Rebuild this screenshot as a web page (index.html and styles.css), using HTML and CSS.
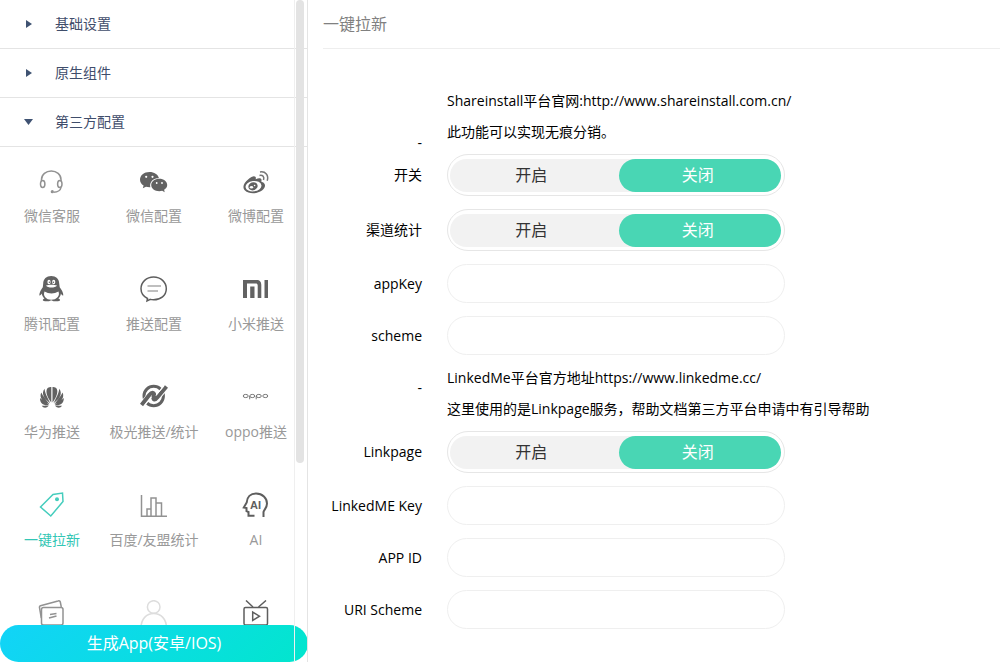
FILE: index.html
```html
<!DOCTYPE html>
<html lang="zh-CN">
<head>
<meta charset="utf-8">
<meta name="viewport" content="width=device-width, initial-scale=1">
<title>一键拉新</title>
<link rel="stylesheet" href="styles.css">
</head>
<body>
<div class="app">
  <aside class="sidebar">
    <nav class="menu">
      <button class="menu-head" type="button" aria-expanded="false"><svg class="arrow" viewBox="0 0 10 10"><path d="M3 1L9 5L3 9Z"/></svg>基础设置</button>
      <button class="menu-head" type="button" aria-expanded="false"><svg class="arrow" viewBox="0 0 10 10"><path d="M3 1L9 5L3 9Z"/></svg>原生组件</button>
      <button class="menu-head" type="button" aria-expanded="true"><svg class="arrow" viewBox="0 0 10 10"><path d="M1 2H10L5.500 8Z"/></svg>第三方配置</button>
      <div class="tiles">
        <a class="tile" href="#"><svg class="icon light" viewBox="0 0 28 28"><path d="M3.500 13V11.500C3.500 6.500 8 3 13.300 3S23 6.500 23 11.500V13M23 19.500C22.500 22.500 19.500 24 15.500 24.300"/><ellipse cx="4.700" cy="16" rx="2.200" ry="3.500"/><ellipse cx="21.800" cy="16" rx="2.200" ry="3.500"/><circle class="fill" cx="14.300" cy="23.700" r="1.600"/></svg>微信客服</a>
        <a class="tile" href="#"><svg class="icon solid" viewBox="0 0 28 28"><path d="M9.500 4C4 4 0 7.400 0 11.700C0 14.100 1.400 16.200 3.600 17.600L2.800 20.300L6 18.700C7.100 19 8.300 19.200 9.500 19.200H10.300C9.200 13.700 13.500 9.900 18.900 9.900C18 6.500 14.200 4 9.500 4Z"/><path d="M27.200 17C27.200 13.500 23.700 10.800 19.300 10.800S11.200 13.500 11.200 17S14.800 23.200 19.300 23.200C20.300 23.200 21.300 23.100 22.200 22.800L24.700 24.200L24.100 21.800C26 20.700 27.200 19 27.200 17Z"/><g class="hole"><circle cx="6.200" cy="8.800" r="1.100"/><circle cx="12.500" cy="8.800" r="1.100"/><circle cx="16.700" cy="15" r=".9"/><circle cx="22" cy="15" r=".9"/></g></svg>微信配置</a>
        <a class="tile" href="#"><svg class="icon solid" viewBox="0 0 28 28"><path d="M9.500 9C12.500 7.300 14.500 8.500 13.700 11.200C17 9.700 20 10 19.500 12.500C19.400 13.300 19 13.700 20 14C24 15.300 24 19.500 20 22.500C15 26.100 6.500 26 3 22.500C0 19.500 1 14.500 9.500 9Z"/><ellipse class="hole" cx="11.500" cy="18.200" rx="8" ry="5.200" transform="rotate(-7 11.500 18.200)"/><ellipse cx="11" cy="18.300" rx="4.700" ry="4" transform="rotate(-20 11 18.300)"/><ellipse class="hole" cx="9.500" cy="19.300" rx="1.700" ry="1.300"/><circle class="hole" cx="12.600" cy="17.500" r=".8"/><path class="line" d="M17.500 7.500C20.800 6.800 22.600 9 21.500 12M18 4C23.500 3 27 7.500 25.200 12.800"/></svg>微博配置</a>

        <a class="tile" href="#"><svg class="icon solid" viewBox="0 0 28 28"><path d="M13.200 0C8.500 0 5.200 3 5.200 7.500L4.800 11.200C3.300 13.500 1.200 16.500 1.300 19.300C2 20 3.200 18.500 3.800 17.500C4 19.600 5 21.300 6.500 22.500C4.500 23 4 25.200 7 25.200H11L13.200 24.200L15.500 25.200H20C23 25.200 22.500 23 20.300 22.500C21.800 21.300 22.700 19.600 22.900 17.500C23.700 18.800 24.500 20 25.300 19.300C25.500 16.500 23.300 13.500 21.700 11.200L21.200 7.500C21.200 3 18 0 13.200 0Z"/><path class="hole" d="M6.500 15.500C11 18 16 18 20.500 15.500C22.300 20 18.500 23.800 13.300 23.800S4.700 20 6.500 15.500Z"/><path class="hole" d="M8 9.500C11 8.400 16 8.400 19 9.500C17 12.200 9.800 12.200 8 9.500Z"/><ellipse class="hole" cx="11" cy="6" rx="1.600" ry="2.200"/><ellipse class="hole" cx="15.700" cy="6" rx="1.600" ry="2.200"/><circle cx="11.400" cy="6.200" r=".7"/><circle cx="15.400" cy="6.200" r=".7"/></svg>腾讯配置</a>
        <a class="tile" href="#"><svg class="icon" viewBox="0 0 28 28"><path d="M7.500 22.500C3.500 20.500 1 17 1 12.800C1 6 6.500 1 13.600 1S26.300 6 26.300 12.800S20.500 23.800 13.600 23.800C12.500 23.800 11.300 23.700 10.300 23.400L7 25Z"/><path class="pale" d="M7.500 10H21M7.500 15H18"/></svg>推送配置</a>
        <a class="tile" href="#"><svg class="icon solid" viewBox="0 0 28 28"><path d="M1 4H14.500C18 4 19.300 6 19.300 9V22H15.700V9.500C15.700 8 15 7.400 13.700 7.400H5V22H1ZM8.200 10.500H12.500V22H8.200ZM22.500 4H26V22H22.500Z"/></svg>小米推送</a>

        <a class="tile" href="#"><svg class="icon solid" viewBox="0 0 28 28"><path d="M13.300 18.500C8.500 12.500 7 6 10 3.700C11 3 12.600 2.900 13.300 3ZM14.500 18.500V3C15.200 2.900 16.800 3 17.800 3.700C20.800 6 19.300 12.500 14.500 18.500ZM12.300 19.300C6 14.500 2.800 9.500 6.600 4.700C6.800 9 9.500 13.500 12.300 19.300ZM15.500 19.300C21.800 14.500 25 9.500 21.200 4.700C21 9 18.300 13.500 15.500 19.300ZM11.500 20.200C4.800 18.300.8 13.500 3.300 8.500C4.800 12 8 15.500 11.500 20.200ZM16.300 20.200C23 18.300 27 13.500 24.500 8.500C23 12 19.800 15.500 16.300 20.200ZM11 21C6.200 22 1.800 19.500 2 13.900C4.500 16.500 8 18 11 21ZM16.800 21C21.600 22 26 19.500 25.800 13.900C23.300 16.500 19.800 18 16.800 21ZM10.800 21.700C8.500 24.300 5.500 24.300 3.700 21.800ZM17 21.700C19.300 24.300 22.300 24.300 24.100 21.800Z"/></svg>华为推送</a>
        <a class="tile" href="#"><svg class="icon jg" viewBox="0 0 28 28"><circle cx="13.700" cy="12" r="9.700"/><path class="gap" d="M2 21L9.500 11.500C11.800 8.500 14.300 8.500 13.200 11.500C11.800 16.500 15 16.500 17.500 13.300L26 3"/><path d="M1.500 21L9.300 11C12 7.700 15 8.300 13.800 11.800C12.300 16.500 15 16.500 17.700 13L26.500 2.500"/><path class="thread" d="M3.500 22.500L11.500 13M16 11.500L24 2"/></svg>极光推送/统计</a>
        <a class="tile" href="#"><svg class="icon thin" viewBox="0 0 28 28"><ellipse cx="3.700" cy="12" rx="2.500" ry="1.600"/><ellipse cx="10.300" cy="12" rx="2.500" ry="1.600"/><ellipse cx="16.800" cy="12" rx="2.500" ry="1.600"/><ellipse cx="23.300" cy="12" rx="2.500" ry="1.600"/><path d="M7.700 12V15.300M14.200 12V15.300"/></svg>oppo推送</a>

        <a class="tile active" href="#"><svg class="icon" viewBox="0 0 28 28"><path d="M2.500 15L15 2.500L24.500 1L25 9.500L12.800 24Z"/><circle class="fill" cx="19" cy="7.200" r="2"/></svg>一键拉新</a>
        <a class="tile" href="#"><svg class="icon light" viewBox="0 0 28 28"><path d="M1.500 3V24.200H27M7 24V17H11V24M11 17V6H16V24M16 11H21.500V24"/></svg>百度/友盟统计</a>
        <a class="tile" href="#"><svg class="icon bold" viewBox="0 0 28 28"><path d="M12.500 23.800H6.500V20C5.700 19.700 5 19.500 4.500 19.200V16L1.800 15.500L4.700 10.500C5 5 8.500 1.500 14 1.500C20.500 1.500 25 6 25 11.500C25 16 22 17.500 21.500 20V25"/><text x="8" y="17">AI</text></svg>AI</a>

        <a class="tile" href="#" aria-label="卡券"><svg class="icon light" viewBox="0 0 28 28"><rect x="3.500" y="7.500" width="21.500" height="17.500" rx="2"/><path d="M3.300 18L1.500 7.500C1.300 6.500 1.600 6 2.500 5.700L20 1C21.300.6 22 1 22.300 2L23.300 7M12 14.500L18.500 13.500M11 18L18.500 16"/></svg></a>
        <a class="tile" href="#" aria-label="用户"><svg class="icon faint" viewBox="0 0 28 28"><circle cx="13.700" cy="7" r="6.300"/><path d="M1 28C1 19 6.500 13.500 13.700 13.500S26.500 19 26.500 28"/></svg></a>
        <a class="tile" href="#" aria-label="视频"><svg class="icon" viewBox="0 0 28 28"><rect x="2" y="7.500" width="23.500" height="17.500" rx="1.500"/><path d="M10.700 12V20.500L17.500 16.200ZM4 .5L11 7M24 .5L16.500 7"/></svg></a>
      </div>
    </nav>
    <span class="thumb"></span>
    <button class="build" type="button">生成App(安卓/IOS)</button>
  </aside>

  <main class="main">
    <h1 class="title">一键拉新</h1>
    <form class="form">
      <div class="row info">
        <span class="dash low">-</span>
        <div class="note"><p>Shareinstall平台官网:http://www.shareinstall.com.cn/</p><p>此功能可以实现无痕分销。</p></div>
      </div>
      <div class="row">
        <span class="label" id="l-switch">开关</span>
        <div class="switch" role="radiogroup" aria-labelledby="l-switch">
          <label class="option"><input type="radio" name="switch" value="1"><span>开启</span></label>
          <label class="option"><input type="radio" name="switch" value="0" checked><span>关闭</span></label>
        </div>
      </div>
      <div class="row">
        <span class="label" id="l-channel">渠道统计</span>
        <div class="switch" role="radiogroup" aria-labelledby="l-channel">
          <label class="option"><input type="radio" name="channel" value="1"><span>开启</span></label>
          <label class="option"><input type="radio" name="channel" value="0" checked><span>关闭</span></label>
        </div>
      </div>
      <div class="row"><label class="label" for="appkey">appKey</label><input class="field" id="appkey" type="text"></div>
      <div class="row"><label class="label" for="scheme">scheme</label><input class="field" id="scheme" type="text"></div>
      <div class="row info">
        <span class="dash high">-</span>
        <div class="note"><p>LinkedMe平台官方地址https://www.linkedme.cc/</p><p>这里使用的是Linkpage服务，帮助文档第三方平台申请中有引导帮助</p></div>
      </div>
      <div class="row">
        <span class="label" id="l-linkpage">Linkpage</span>
        <div class="switch" role="radiogroup" aria-labelledby="l-linkpage">
          <label class="option"><input type="radio" name="linkpage" value="1"><span>开启</span></label>
          <label class="option"><input type="radio" name="linkpage" value="0" checked><span>关闭</span></label>
        </div>
      </div>
      <div class="row"><label class="label" for="lmkey">LinkedME Key</label><input class="field" id="lmkey" type="text"></div>
      <div class="row"><label class="label" for="appid">APP ID</label><input class="field" id="appid" type="text"></div>
      <div class="row"><label class="label" for="uri">URI Scheme</label><input class="field" id="uri" type="text"></div>
    </form>
  </main>
</div>
</body>
</html>
```
FILE: styles.css
```css
* { box-sizing: border-box; }
body {
  margin: 0;
  background: #fff;
  color: #000;
  font: 14px/20px "Open Sans", "Noto Sans CJK SC", sans-serif;
}
button, input { font: inherit; }
.app { display: flex; height: 100vh; overflow: hidden; }

.sidebar {
  position: relative;
  flex: 0 0 308px;
  overflow: hidden;
  border-right: 1px solid #e4e4e4;
}
.sidebar::after {
  content: "";
  position: absolute;
  top: 0;
  bottom: 0;
  left: 294px;
  width: 1px;
  background: #efefef;
}
.menu-head {
  display: flex;
  align-items: center;
  gap: 22px;
  width: 100%;
  height: 49px;
  padding: 0 23px;
  border: 0;
  border-bottom: 1px solid #e4e4e4;
  background: none;
  color: #3f4d6b;
  text-align: left;
}
.arrow { width: 10px; height: 10px; fill: #3f5272; }
.thumb {
  position: absolute;
  top: 0;
  right: 3px;
  width: 8px;
  height: 70%;
  border-radius: 4px;
  background: #e3e3e3;
}
.tiles {
  display: grid;
  grid-template-columns: repeat(3, 102px);
  grid-auto-rows: 108px;
  padding-left: 1px;
}
.tile {
  display: flex;
  flex-direction: column;
  align-items: center;
  gap: 10px;
  padding-top: 21px;
  color: #999;
  text-decoration: none;
  white-space: nowrap;
}
.tile.active { color: #33c6b5; }
.icon {
  width: 28px;
  height: 28px;
  fill: none;
  stroke: #5e5e5e;
  stroke-width: 1.5;
}
.icon.light { stroke: #929292; }
.icon.faint { stroke: #ddd; }
.icon.bold { stroke-width: 2; }
.icon.thin { stroke: #777; stroke-width: 1; }
.icon.solid { fill: #626262; stroke: none; }
.icon.jg { stroke: #626262; stroke-width: 3; }
.icon.jg path { stroke-width: 4; }
.icon.jg .gap { stroke: #fff; stroke-width: 6; }
.icon.jg .thread { stroke: #fff; stroke-width: 1; }
.icon .hole { fill: #fff; }
.icon .line { fill: none; stroke: #777; stroke-width: 1.5; }
.icon .pale { stroke: #aaa; }
.icon .fill { fill: #929292; stroke: none; }
.icon text { fill: #5e5e5e; stroke: none; font: bold 11px "Liberation Sans", sans-serif; }
.active .icon { stroke: #45cdbd; }
.active .icon .fill { fill: #45cdbd; }
.build {
  position: absolute;
  left: 0;
  right: -1px;
  bottom: 0;
  height: 37px;
  padding: 0 0 2px;
  border: 0;
  border-radius: 19px;
  background: linear-gradient(135deg, #12d3f8, #02e6cd);
  color: #fff;
  font-size: 16px;
}

.main { flex: 1; min-width: 0; padding-left: 15px; }
.title {
  margin: 0;
  height: 49px;
  border-bottom: 1px solid #eee;
  color: #808080;
  font-size: 16px;
  font-weight: 400;
  line-height: 48px;
}
.form { padding-top: 35px; }
.row {
  display: grid;
  grid-template-columns: 99px minmax(0, 1fr);
  column-gap: 25px;
  align-items: center;
  padding: 7px 0 6px;
}
.row.info { padding: 1px 0 0; }
.label, .dash { text-align: right; white-space: nowrap; }
.dash { line-height: 14px; }
.dash.low { align-self: end; line-height: 8px; }
.dash.high { align-self: start; padding-top: 19px; }
.note p { margin: 0; line-height: 31px; }
.field, .switch {
  width: 100%;
  max-width: 338px;
  border: 1px solid #efefef;
  border-radius: 21px;
  background: #fff;
}
.field { height: 39px; padding: 0 16px; outline: 0; }
.switch {
  display: flex;
  height: 42px;
  padding: 4px 3px 3px 2px;
  border-color: #e6e6e6;
}
.option {
  position: relative;
  flex: 1;
  background: #f2f2f2;
  color: #333;
  font-size: 16px;
  line-height: 33px;
  text-align: center;
}
.option:first-child { border-radius: 17px 0 0 17px; }
.option:last-child { border-radius: 0 17px 17px 0; padding-left: 6px; }
.option span { display: block; border-radius: 17px; }
.option:last-child span { padding-right: 4px; }
.option input { position: absolute; inset: 0; margin: 0; opacity: 0; }
.option input:checked + span { background: #49d6b4; color: #fff; }
```
